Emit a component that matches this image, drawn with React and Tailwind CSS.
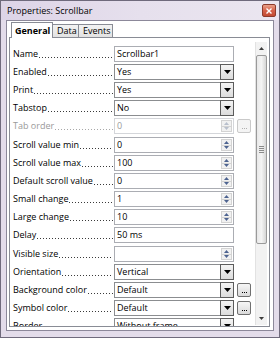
import React from "react";

function Tri({ up = false, color = "#000", w = 7, h = 4 }) {
  return (
    <svg width={w} height={h} viewBox={`0 0 ${w} ${h}`} className="block">
      {up ? (
        <polygon points={`0,${h} ${w},${h} ${w / 2},0`} fill={color} />
      ) : (
        <polygon points={`0,0 ${w},0 ${w / 2},${h}`} fill={color} />
      )}
    </svg>
  );
}

function Label({ text, disabled }) {
  return (
    <div
      className={`flex items-end h-[16px] w-[100px] whitespace-nowrap ${
        disabled ? "text-[#9a9a9a]" : "text-black"
      }`}
    >
      <span className="shrink-0 leading-[12px] mb-[2px]">{text}</span>
      <span
        className={`flex-1 h-[1px] mb-[4px] ml-[1px] bg-[length:3px_1px] ${
          disabled
            ? "bg-[linear-gradient(to_right,#a8a8a8_1px,transparent_1px)]"
            : "bg-[linear-gradient(to_right,#3a3a3a_1px,transparent_1px)]"
        }`}
      />
    </div>
  );
}

function Field({ kind, value, disabled }) {
  const border =
    kind === "combo" ? "border-[#8b8d90]" : disabled ? "border-[#d4d6da]" : "border-[#abadb3]";
  return (
    <div
      className={`relative ml-[1px] w-[120px] h-[16px] border ${border} bg-white flex items-center pl-[2px] ${
        disabled ? "text-[#9a9a9a]" : "text-black"
      }`}
    >
      <span className="whitespace-nowrap leading-[12px]">{value}</span>
      {kind === "combo" && (
        <div className="absolute -right-px -top-px -bottom-px w-[14px] border border-[#5c5c5c] bg-gradient-to-b from-[#f4f4f4] to-[#dcdcdc] flex items-center justify-center">
          <Tri w={7} h={4} color="#000" />
        </div>
      )}
      {kind === "spin" && (
        <div className="absolute right-px top-px bottom-px w-[11px] flex flex-col">
          <div className="flex-1 border border-[#d3d3d3] bg-[#f1f1f1] flex items-center justify-center">
            <Tri up w={5} h={3} color={disabled ? "#b8bfcc" : "#4d6390"} />
          </div>
          <div className="flex-1 border border-t-0 border-[#d3d3d3] bg-[#f1f1f1] flex items-center justify-center">
            <Tri w={5} h={3} color={disabled ? "#b8bfcc" : "#4d6390"} />
          </div>
        </div>
      )}
    </div>
  );
}

function DotsButton({ disabled }) {
  return (
    <div
      className={`ml-[3px] w-[14px] h-[14px] rounded-[2px] border flex items-end justify-center pb-[3px] gap-[1px] ${
        disabled
          ? "border-[#c9c9c9] bg-[#f4f4f4]"
          : "border-[#707070] bg-gradient-to-b from-[#f6f6f6] to-[#dadada]"
      }`}
    >
      {[0, 1, 2].map((i) => (
        <span
          key={i}
          className={`block w-[1px] h-[1px] ${disabled ? "bg-[#b0b0b0]" : "bg-black"}`}
        />
      ))}
    </div>
  );
}

const rows = [
  { label: "Name", kind: "text", value: "Scrollbar1" },
  { label: "Enabled", kind: "combo", value: "Yes" },
  { label: "Print", kind: "combo", value: "Yes" },
  { label: "Tabstop", kind: "combo", value: "No" },
  { label: "Tab order", kind: "spin", value: "0", disabled: true, btn: true, extra: true },
  { label: "Scroll value min", kind: "spin", value: "0" },
  { label: "Scroll value max", kind: "spin", value: "100" },
  { label: "Default scroll value", kind: "spin", value: "0" },
  { label: "Small change", kind: "spin", value: "1" },
  { label: "Large change", kind: "spin", value: "10" },
  { label: "Delay", kind: "text", value: "50 ms", extra: true },
  { label: "Visible size", kind: "spin", value: "" },
  { label: "Orientation", kind: "combo", value: "Vertical" },
  { label: "Background color", kind: "combo", value: "Default", btn: true },
  { label: "Symbol color", kind: "combo", value: "Default", btn: true },
  { label: "Border", kind: "combo", value: "Without frame" },
];

export default function App() {
  return (
    <div className="w-[280px] h-[338px] overflow-hidden border border-[#6f6a7c] bg-[#e3dcea] flex flex-col font-['Open_Sans',sans-serif] text-[9px] leading-[12px] text-black">
      {/* Title bar */}
      <div className="h-[19px] shrink-0 flex items-center justify-between pl-[6px] pr-[3px] bg-gradient-to-r from-[#ddd4e7] via-[#e6e0ed] to-[#ebe6f0]">
        <span className="text-[9px] text-black">Properties: Scrollbar</span>
        <div className="w-[14px] h-[13px] rounded-[2px] border border-[#8d3b2c] bg-gradient-to-b from-[#e9a08a] via-[#d6614a] to-[#c24a32] flex items-center justify-center">
          <svg width="6" height="6" viewBox="0 0 6 6" className="block">
            <path d="M0.5 0.5 L5.5 5.5 M5.5 0.5 L0.5 5.5" stroke="#fff" strokeWidth="1.4" />
          </svg>
        </div>
      </div>

      {/* Client area */}
      <div className="flex-1 mx-[5px] mb-[6px] border border-[#8c889a] bg-white flex flex-col pt-[1px] pl-[2px] pr-[3px] pb-[3px] min-h-0">
        {/* Tabs */}
        <div className="h-[15px] shrink-0 flex items-end pl-[2px] relative z-10">
          <div className="h-[16px] -mb-px w-[42px] border border-b-0 border-[#898c95] bg-white flex items-center pl-[3px] font-bold">
            General
          </div>
          <div className="h-[13px] w-[26px] border border-l-0 border-b-0 border-[#898c95] bg-gradient-to-b from-[#f3f3f3] to-[#e2e2e2] flex items-center pl-[4px]">
            Data
          </div>
          <div className="h-[13px] w-[34px] border border-l-0 border-b-0 border-[#898c95] bg-gradient-to-b from-[#f3f3f3] to-[#e2e2e2] flex items-center pl-[4px]">
            Events
          </div>
        </div>

        {/* Panel */}
        <div className="flex-1 min-h-0 border border-[#898c95] bg-white flex overflow-hidden">
          <div className="w-[245px] shrink-0 pl-[3px] pt-[8px] flex flex-col">
            {rows.map((r) => (
              <div
                key={r.label}
                className={`h-[16px] shrink-0 flex items-center ${r.extra ? "mb-[3px]" : "mb-[2px]"}`}
              >
                <Label text={r.label} disabled={r.disabled} />
                <Field kind={r.kind} value={r.value} disabled={r.disabled} />
                {r.btn && <DotsButton disabled={r.disabled} />}
              </div>
            ))}
          </div>

          {/* Scrollbar */}
          <div className="w-[12px] shrink-0 mt-[4px] mb-[1px] bg-[#f2f2f2] border-l border-[#e2e2e2] flex flex-col">
            <div className="h-[13px] shrink-0 flex items-center justify-center">
              <Tri up w={5} h={3} color="#3c3c3c" />
            </div>
            <div className="h-[189px] shrink-0 rounded-[2px] border border-[#9a9a9a] bg-gradient-to-r from-[#e9e9e9] via-[#f4f4f4] to-[#d6d6d6] flex flex-col items-center justify-center gap-[1px]">
              {[0, 1, 2, 3].map((i) => (
                <span key={i} className="block w-[5px] h-[1px] bg-[#8a8a8a]" />
              ))}
            </div>
            <div className="flex-1" />
            <div className="h-[13px] shrink-0 flex items-center justify-center">
              <Tri w={5} h={3} color="#3c3c3c" />
            </div>
          </div>
        </div>
      </div>
    </div>
  );
}
